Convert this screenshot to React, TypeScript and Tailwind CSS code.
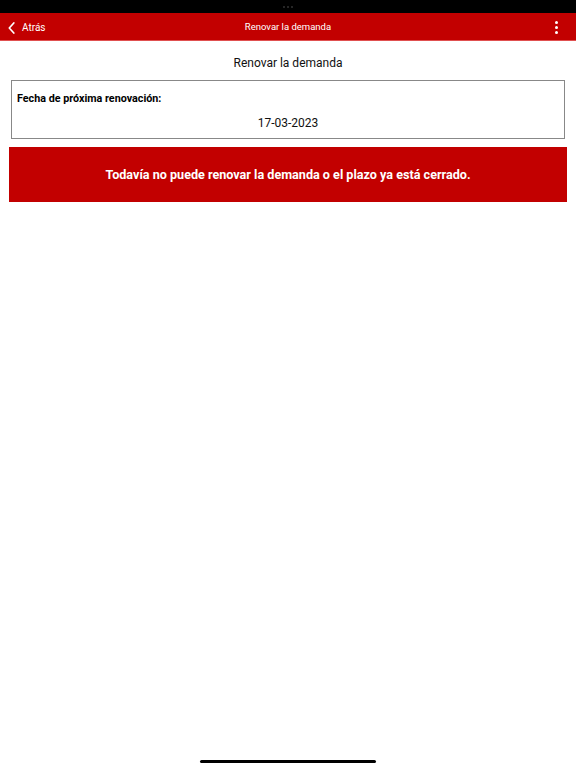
import React from "react";

export default function App() {
  return (
    <div className="w-[576px] h-[768px] bg-white relative overflow-hidden" style={{ fontFamily: 'Roboto, "Liberation Sans", Arial, sans-serif' }}>
      <div className="h-[13px] bg-black flex items-center justify-center gap-[2px]">
        <span className="w-[2px] h-[2px] rounded-full bg-[#333]" />
        <span className="w-[2px] h-[2px] rounded-full bg-[#333]" />
        <span className="w-[2px] h-[2px] rounded-full bg-[#333]" />
      </div>
      <div className="h-[28px] bg-[#c20000] border-b border-[#e05050] flex items-center pl-[8px] pr-[8px] relative">
        <div className="flex items-center gap-[7px] text-white text-[10px] mt-[2px]">
          <svg width="7" height="12" viewBox="0 0 7 12" fill="none">
            <path d="M5.8 1 L1.3 6 L5.8 11" stroke="white" strokeWidth="1.7" strokeLinecap="round" strokeLinejoin="round" />
          </svg>
          <span>Atrás</span>
        </div>
        <div className="absolute left-0 right-0 text-center text-white text-[9.5px] mt-[2px] pointer-events-none">Renovar la demanda</div>
        <div className="ml-auto mr-[10px] flex flex-col gap-[2px] mt-[1px]">
          <span className="w-[3px] h-[3px] bg-white rounded-full" />
          <span className="w-[3px] h-[3px] bg-white rounded-full" />
          <span className="w-[3px] h-[3px] bg-white rounded-full" />
        </div>
      </div>
      <div className="h-[39px] flex items-center justify-center pt-[4px] text-[12px] text-[#111]">Renovar la demanda</div>
      <div className="mx-[11px] h-[59px] border border-[#888] px-[5px] pt-[11px]">
        <div className="text-[10.75px] font-bold text-black leading-[14px]">Fecha de próxima renovación:</div>
        <div className="text-center text-[12px] text-[#111] mt-[8px]">17-03-2023</div>
      </div>
      <div className="mx-[9px] mt-[8px] h-[55px] bg-[#c20000] flex items-center justify-center pt-[1px] text-white font-bold text-[12.6px]">
        Todavía no puede renovar la demanda o el plazo ya está cerrado.
      </div>
      <div className="absolute left-[200px] bottom-[5px] w-[176px] h-[3px] bg-black rounded-full" />
    </div>
  );
}
